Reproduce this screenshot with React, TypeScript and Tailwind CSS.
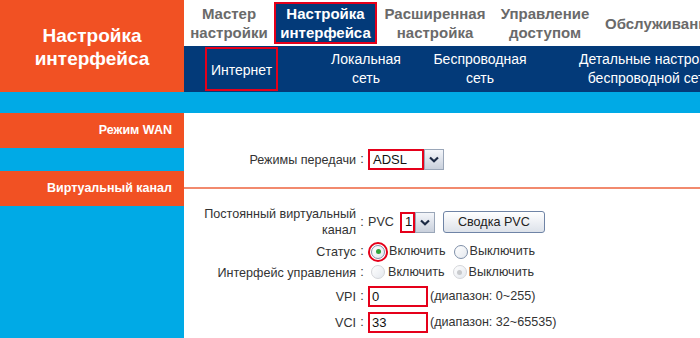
import React from 'react';

const RED = 'border-[#e5001a]';

function Chevron() {
  return (
    <svg width="10" height="7" viewBox="0 0 10 7">
      <path d="M1 1.5 L5 5.2 L9 1.5" fill="none" stroke="#1c2a44" strokeWidth="2.2" />
    </svg>
  );
}

function SelectBox({ value, width }: { value: string; width: string }) {
  return (
    <div className="flex h-[21px] items-stretch">
      <div className={`${width} border-2 ${RED} bg-white flex items-center pl-[3px] text-[13px] text-[#111]`}>{value}</div>
      <div className="w-[20px] border border-[#9aa6b8] bg-gradient-to-b from-[#f4f6fa] to-[#c9d0dc] flex items-center justify-center">
        <Chevron />
      </div>
    </div>
  );
}

function Radio({ checked, disabled, highlight }: { checked?: boolean; disabled?: boolean; highlight?: boolean }) {
  const ring = disabled ? 'border-[#d4d6da]' : 'border-[#7e8fa8]';
  const dot = disabled ? 'bg-[#c8cacd]' : 'bg-[#2fa33a]';
  const inner = (
    <div className={`w-[14px] h-[14px] rounded-full border ${ring} bg-gradient-to-br from-[#ffffff] to-[#e4e8ee] flex items-center justify-center`}>
      {checked && <div className={`w-[5px] h-[5px] rounded-full ${dot}`} />}
    </div>
  );
  if (highlight) {
    return (
      <div className="w-[20px] h-[20px] rounded-full border-2 border-[#e5001a] flex items-center justify-center">
        {inner}
      </div>
    );
  }
  return inner;
}

function Row({ label, children, className = '' }: { label: React.ReactNode; children: React.ReactNode; className?: string }) {
  return (
    <div className={`flex items-center ${className}`}>
      <div className="w-[172px] shrink-0 text-right leading-[16px] whitespace-nowrap">{label}</div>
      <div className="w-[12px] shrink-0 text-center">:</div>
      <div className="flex items-center whitespace-nowrap">{children}</div>
    </div>
  );
}

export default function App() {
  return (
    <div className="w-[700px] h-[338px] overflow-hidden flex font-['Liberation_Sans',Arial,sans-serif]">
      {/* left column */}
      <div className="w-[184px] shrink-0 flex flex-col">
        <div className="h-[92px] bg-[#f15123] flex items-center justify-center text-center text-white font-bold text-[19px] leading-[23px] pt-[2px]">
          Настройка<br />интерфейса
        </div>
        <div className="h-[21px] bg-[#00aae6]" />
        <div className="h-[35px] bg-[#f15123] flex items-center justify-end pr-[12px] text-white font-bold text-[12.5px]">Режим WAN</div>
        <div className="h-[23px] bg-[#00aae6]" />
        <div className="h-[35px] bg-[#f15123] flex items-center justify-end pr-[12px] text-white font-bold text-[12.5px]">Виртуальный канал</div>
        <div className="flex-1 bg-[#00aae6]" />
      </div>

      {/* right column */}
      <div className="flex-1 flex flex-col min-w-0">
        <div className="h-[46px] bg-white flex items-stretch text-[15px] font-bold leading-[19px] text-center whitespace-nowrap">
          <div className="w-[90px] shrink-0 flex items-center justify-center text-[#6a6a6a]">Мастер<br />настройки</div>
          <div className={`w-[103px] shrink-0 my-[2px] border-2 ${RED} bg-[#033a79] text-white flex items-center justify-center`}>Настройка<br />интерфейса</div>
          <div className="w-[116px] shrink-0 flex items-center justify-center text-[#6a6a6a]">Расширенная<br />настройка</div>
          <div className="w-[104px] shrink-0 flex items-center justify-center text-[#6a6a6a]">Управление<br />доступом</div>
          <div className="shrink-0 pl-[8px] flex items-center text-[#6a6a6a]">Обслуживание</div>
        </div>
        <div className="h-[46px] bg-[#033a79] flex items-stretch text-white text-[14px] leading-[19px] text-center whitespace-nowrap">
          <div className={`ml-[21px] w-[73px] shrink-0 my-[1px] border-2 ${RED} flex items-center justify-center pt-[3px]`}>Интернет</div>
          <div className="ml-[38px] w-[100px] shrink-0 flex items-center justify-center">Локальная<br />сеть</div>
          <div className="ml-[9px] w-[110px] shrink-0 flex items-center justify-center">Беспроводная<br />сеть</div>
          <div className="ml-[42px] w-[146px] shrink-0 flex items-center justify-center">Детальные настройки<br />беспроводной сети</div>
        </div>
        <div className="h-[21px] bg-[#00aae6]" />

        <div className="flex-1 bg-white text-[12.6px] text-[#333]">
          <div className="h-[74px] pt-[36px]">
            <Row label="Режимы передачи">
              <SelectBox value="ADSL" width="w-[56px]" />
            </Row>
          </div>
          <div className="h-[2px] bg-[#f28a6e]" />
          <div className="pt-[18px]">
            <Row label={<>Постоянный виртуальный<br />канал</>} className="h-[30px]">
              <span className="mr-[6px]">PVC</span>
              <SelectBox value="1" width="w-[15px]" />
              <button className="ml-[8px] w-[102px] h-[22px] rounded-[3px] border border-[#6f84a6] bg-gradient-to-b from-[#ffffff] to-[#dde2ea] text-[12.6px] text-[#222]">Сводка PVC</button>
            </Row>
            <Row label="Статус" className="h-[21px] mt-[4px]">
              <Radio checked highlight />
              <span className="ml-[1px]">Включить</span>
              <span className="ml-[8px]"><Radio /></span>
              <span className="ml-[2px]">Выключить</span>
            </Row>
            <Row label="Интерфейс управления" className="h-[21px]">
              <span className="ml-[3px]"><Radio disabled /></span>
              <span className="ml-[3px]">Включить</span>
              <span className="ml-[8px]"><Radio checked disabled /></span>
              <span className="ml-[2px]">Выключить</span>
            </Row>
            <Row label="VPI" className="h-[21px] mt-[3px]">
              <div className={`w-[60px] h-[21px] border-2 ${RED} flex items-center pl-[2px] text-[13px] text-[#111]`}>0</div>
              <span className="ml-[2px]">(диапазон: 0~255)</span>
            </Row>
            <Row label="VCI" className="h-[21px] mt-[5px]">
              <div className={`w-[60px] h-[21px] border-2 ${RED} flex items-center pl-[2px] text-[13px] text-[#111]`}>33</div>
              <span className="ml-[2px]">(диапазон: 32~65535)</span>
            </Row>
          </div>
        </div>
      </div>
    </div>
  );
}
